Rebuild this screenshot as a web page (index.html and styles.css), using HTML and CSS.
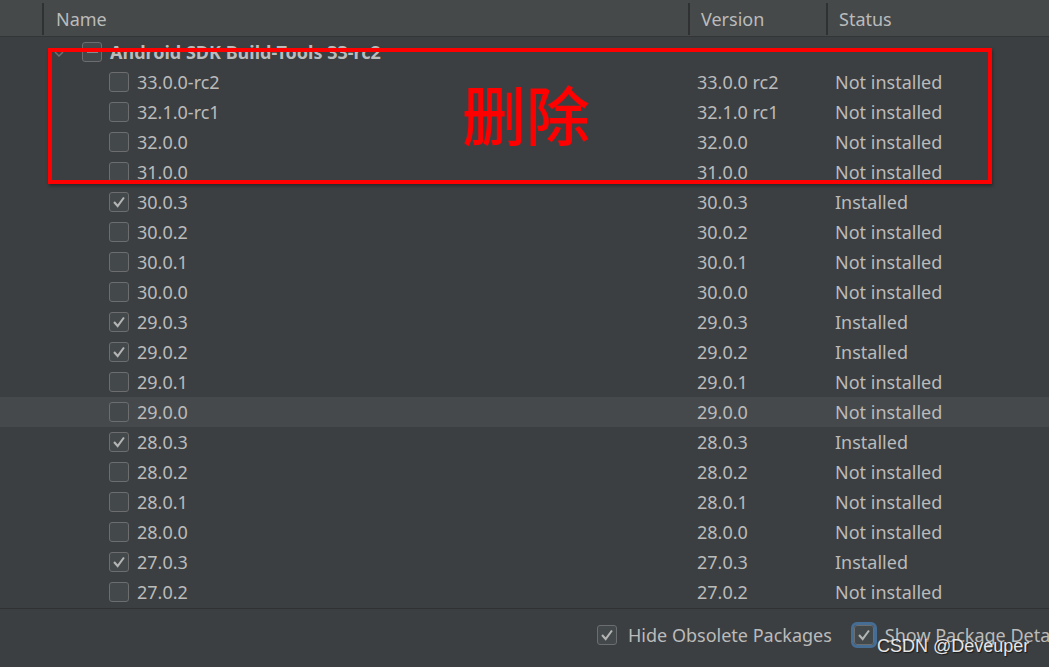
FILE: index.html
```html
<!DOCTYPE html>
<html lang="en">
<head>
<meta charset="utf-8">
<title>SDK Tools</title>
<link rel="stylesheet" href="styles.css">
</head>
<body>
<div class="panel">
  <div class="header">
    <div class="hcell lead"></div>
    <div class="hcell name">Name</div>
    <div class="hcell version">Version</div>
    <div class="hcell status">Status</div>
  </div>
  <div class="rows">
    <div class="row group">
      <div class="cell name">
        <span class="arrow"><svg width="10" height="8" viewBox="0 0 10 8"><path d="M1 2 L5 6 L9 2" fill="none" stroke="#6e7072" stroke-width="1.5"/></svg></span>
        <span class="cb partial"><span class="dash"></span></span>
        <span class="label bold">Android SDK Build-Tools 33-rc2</span>
      </div>
      <div class="cell version"></div>
      <div class="cell status"></div>
    </div>
    <div class="row"><div class="cell name child"><span class="cb"></span><span class="label">33.0.0-rc2</span></div><div class="cell version">33.0.0 rc2</div><div class="cell status">Not installed</div></div>
    <div class="row"><div class="cell name child"><span class="cb"></span><span class="label">32.1.0-rc1</span></div><div class="cell version">32.1.0 rc1</div><div class="cell status">Not installed</div></div>
    <div class="row"><div class="cell name child"><span class="cb"></span><span class="label">32.0.0</span></div><div class="cell version">32.0.0</div><div class="cell status">Not installed</div></div>
    <div class="row"><div class="cell name child"><span class="cb"></span><span class="label">31.0.0</span></div><div class="cell version">31.0.0</div><div class="cell status">Not installed</div></div>
    <div class="row"><div class="cell name child"><span class="cb checked"><svg viewBox="0 0 20 20"><path d="M4.5 10 L8.5 14.5 L15.5 5" fill="none" stroke="#b4b4b4" stroke-width="2.3"/></svg></span><span class="label">30.0.3</span></div><div class="cell version">30.0.3</div><div class="cell status">Installed</div></div>
    <div class="row"><div class="cell name child"><span class="cb"></span><span class="label">30.0.2</span></div><div class="cell version">30.0.2</div><div class="cell status">Not installed</div></div>
    <div class="row"><div class="cell name child"><span class="cb"></span><span class="label">30.0.1</span></div><div class="cell version">30.0.1</div><div class="cell status">Not installed</div></div>
    <div class="row"><div class="cell name child"><span class="cb"></span><span class="label">30.0.0</span></div><div class="cell version">30.0.0</div><div class="cell status">Not installed</div></div>
    <div class="row"><div class="cell name child"><span class="cb checked"><svg viewBox="0 0 20 20"><path d="M4.5 10 L8.5 14.5 L15.5 5" fill="none" stroke="#b4b4b4" stroke-width="2.3"/></svg></span><span class="label">29.0.3</span></div><div class="cell version">29.0.3</div><div class="cell status">Installed</div></div>
    <div class="row"><div class="cell name child"><span class="cb checked"><svg viewBox="0 0 20 20"><path d="M4.5 10 L8.5 14.5 L15.5 5" fill="none" stroke="#b4b4b4" stroke-width="2.3"/></svg></span><span class="label">29.0.2</span></div><div class="cell version">29.0.2</div><div class="cell status">Installed</div></div>
    <div class="row"><div class="cell name child"><span class="cb"></span><span class="label">29.0.1</span></div><div class="cell version">29.0.1</div><div class="cell status">Not installed</div></div>
    <div class="row hover"><div class="cell name child"><span class="cb"></span><span class="label">29.0.0</span></div><div class="cell version">29.0.0</div><div class="cell status">Not installed</div></div>
    <div class="row"><div class="cell name child"><span class="cb checked"><svg viewBox="0 0 20 20"><path d="M4.5 10 L8.5 14.5 L15.5 5" fill="none" stroke="#b4b4b4" stroke-width="2.3"/></svg></span><span class="label">28.0.3</span></div><div class="cell version">28.0.3</div><div class="cell status">Installed</div></div>
    <div class="row"><div class="cell name child"><span class="cb"></span><span class="label">28.0.2</span></div><div class="cell version">28.0.2</div><div class="cell status">Not installed</div></div>
    <div class="row"><div class="cell name child"><span class="cb"></span><span class="label">28.0.1</span></div><div class="cell version">28.0.1</div><div class="cell status">Not installed</div></div>
    <div class="row"><div class="cell name child"><span class="cb"></span><span class="label">28.0.0</span></div><div class="cell version">28.0.0</div><div class="cell status">Not installed</div></div>
    <div class="row"><div class="cell name child"><span class="cb checked"><svg viewBox="0 0 20 20"><path d="M4.5 10 L8.5 14.5 L15.5 5" fill="none" stroke="#b4b4b4" stroke-width="2.3"/></svg></span><span class="label">27.0.3</span></div><div class="cell version">27.0.3</div><div class="cell status">Installed</div></div>
    <div class="row"><div class="cell name child"><span class="cb"></span><span class="label">27.0.2</span></div><div class="cell version">27.0.2</div><div class="cell status">Not installed</div></div>
  </div>
  <div class="footer">
    <label class="opt"><span class="cb checked"><svg viewBox="0 0 20 20"><path d="M4.5 10 L8.5 14.5 L15.5 5" fill="none" stroke="#b4b4b4" stroke-width="2.3"/></svg></span><span class="label">Hide Obsolete Packages</span></label>
    <label class="opt"><span class="cb checked focus"><svg viewBox="0 0 20 20"><path d="M4.5 10 L8.5 14.5 L15.5 5" fill="none" stroke="#b4b4b4" stroke-width="2.3"/></svg></span><span class="label">Show Package Details</span></label>
  </div>
  <div class="mark">
    <div class="mark-text">删除</div>
  </div>
  <div class="watermark">CSDN @Deveuper</div>
</div>
</body>
</html>
```
FILE: styles.css
```css
html, body {
  margin: 0;
  padding: 0;
  background: #3c3f41;
  overflow: hidden;
}
.panel {
  position: relative;
  width: 1049px;
  height: 667px;
  background: #3c3f41;
  font-family: "Noto Sans", "Open Sans", sans-serif;
  font-size: 18px;
  color: #bbbbbb;
  overflow: hidden;
}
.header {
  display: flex;
  height: 37px;
  background: #45494a;
  border-bottom: 1px solid #333536;
  box-sizing: border-box;
}
.hcell {
  display: flex;
  align-items: center;
  height: 32px;
  margin-top: 3px;
  box-sizing: border-box;
}
.hcell.lead {
  width: 44px;
  border-right: 2px solid #2f3133;
}
.hcell.name {
  width: 646px;
  padding-left: 12px;
  border-right: 2px solid #2f3133;
}
.hcell.version {
  width: 138px;
  padding-left: 11px;
  border-right: 2px solid #2f3133;
}
.hcell.status {
  flex: 1;
  padding-left: 11px;
}
.rows {
  height: 571px;
}
.row {
  display: flex;
  align-items: center;
  height: 30px;
}
.row.hover {
  background: #46494c;
}
.cell {
  display: flex;
  align-items: center;
  height: 100%;
  box-sizing: border-box;
}
.cell.name {
  width: 690px;
}
.cell.name.child {
  padding-left: 109px;
}
.row.group .cell.name {
  padding-left: 54px;
}
.cell.version {
  width: 138px;
  padding-left: 7px;
}
.cell.status {
  flex: 1;
  padding-left: 7px;
}
.arrow {
  display: inline-flex;
  width: 14px;
  margin-right: 14px;
  margin-top: 3px;
}
.cb {
  display: inline-flex;
  align-items: center;
  justify-content: center;
  width: 20px;
  height: 20px;
  box-sizing: border-box;
  border: 1px solid #6b6d6f;
  border-radius: 3px;
  background: #43494a;
  flex: none;
}
.cb svg {
  width: 20px;
  height: 20px;
}
.cb.partial .dash {
  width: 11px;
  height: 2px;
  background: #8a8c8e;
}
.label {
  margin-left: 8px;
  white-space: nowrap;
}
.bold {
  font-weight: bold;
}
.footer {
  display: flex;
  align-items: center;
  height: 58px;
  border-top: 1px solid #2f3133;
  padding-left: 597px;
  padding-bottom: 6px;
  box-sizing: border-box;
  gap: 22px;
  white-space: nowrap;
}
.footer .opt {
  display: flex;
  align-items: center;
}
.footer .label {
  margin-left: 11px;
}
.cb.focus {
  outline: 3px solid #466d94;
  outline-offset: 0px;
}
.mark {
  position: absolute;
  left: 48px;
  top: 48px;
  width: 944px;
  height: 136px;
  box-sizing: border-box;
  border: 4px solid #ff0000;
  box-shadow: 1px 2px 3px rgba(0, 0, 0, 0.35);
}
.mark-text {
  position: absolute;
  left: 410px;
  top: 28px;
  font-family: "Noto Sans CJK SC", sans-serif;
  font-size: 64px;
  font-weight: 500;
  line-height: 1;
  color: #ff0000;
}
.watermark {
  position: absolute;
  left: 877px;
  top: 636px;
  font-family: "Liberation Sans", Arial, sans-serif;
  font-size: 18px;
  color: #e6e6e6;
  text-shadow: 1px 1px 1px rgba(0, 0, 0, 0.6);
  white-space: nowrap;
}
```
